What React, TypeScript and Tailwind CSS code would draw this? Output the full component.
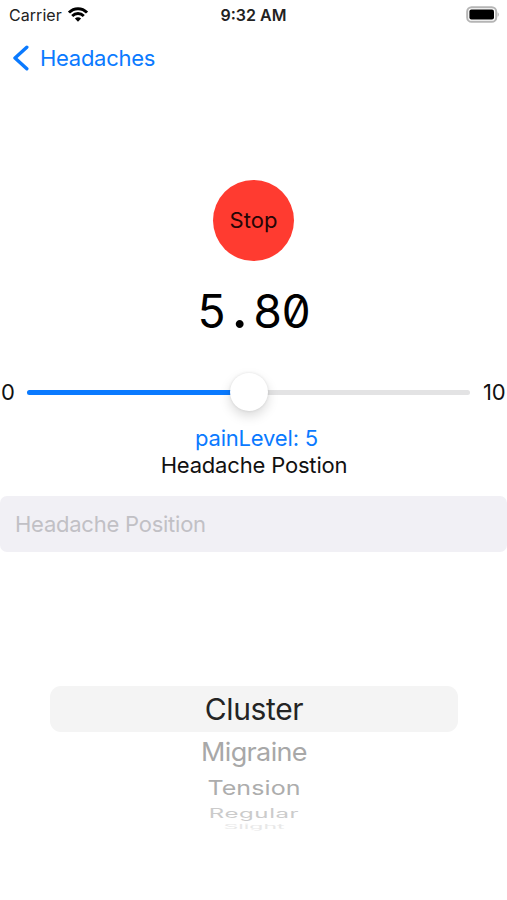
import clsx from 'clsx';
import { useState } from 'react';

const headacheTypes = [
    { name: 'Cluster', row: 'h-[46px] text-[#242424]', label: 'text-[30px] tracking-[-0.4px]' },
    { name: 'Migraine', row: 'h-[40px] text-[#a8a8a8]', label: 'text-[27px] scale-y-[0.95] tracking-[-0.65px]' },
    { name: 'Tension', row: 'h-[33px] text-[#adadad]', label: 'text-[25px] scale-y-[0.8] tracking-[0.1px]' },
    { name: 'Regular', row: 'h-[18px] text-[#cbcbcb]', label: 'text-[24px] scale-y-[0.52] tracking-[0.6px]' },
    { name: 'Slight', row: 'h-[8px] text-[#e8e8e8]', label: 'text-[23px] scale-y-[0.25]' },
];

function StatusBar() {
    return (
        <div className="grid h-[29px] grid-cols-3 items-center px-[9px] text-[16px] text-[#222]">
            <div className="flex items-center gap-[6px]">
                <span className="tracking-[0.05px]">Carrier</span>
                <svg width="20" height="15" viewBox="0 0 20 15" fill="none" stroke="#000" strokeWidth="2.9">
                    <path d="M1 5.6C6 0.4 14 0.4 19 5.6" />
                    <path d="M4.2 9C7.5 5.7 12.5 5.7 15.8 9" />
                    <path d="M10 14.7L6.9 11.6C8.7 9.9 11.3 9.9 13.1 11.6Z" fill="#000" stroke="none" />
                </svg>
            </div>
            <span className="text-center font-semibold tracking-[0]">9:32 AM</span>
            <svg className="-mr-px justify-self-end" width="33" height="17" viewBox="0 0 33 17">
                <rect x="1.2" y="1.2" width="29" height="14.6" rx="4.4" fill="#fff" stroke="#b5b5b5" strokeWidth="2" />
                <rect x="3.4" y="3.4" width="24.6" height="10.2" rx="2" fill="#000" />
                <path d="M31.6 6.2C33.2 7 33.2 10 31.6 10.8Z" fill="#b5b5b5" />
            </svg>
        </div>
    );
}

export default function App() {
    const [painLevel] = useState(5);

    return (
        <div className="flex h-[900px] w-[507px] flex-col overflow-hidden bg-white font-['Inter',sans-serif] text-[22px] text-[#111]">
            <StatusBar />

            {/* Navigation */}
            <nav className="flex h-[58px] items-center px-[12px] text-[#0a7aff]">
                <svg width="18" height="26" viewBox="0 0 18 26" fill="none" stroke="currentColor" strokeWidth="3.4" strokeLinecap="round" strokeLinejoin="round">
                    <path d="M14.8 2.2L3 13L14.8 23.8" />
                </svg>
                <span className="ml-[10px] tracking-[-0.28px]">Headaches</span>
            </nav>

            {/* Timer */}
            <div className="mt-[93px] flex flex-col items-center">
                <button className="size-[81px] rounded-full bg-[#ff3b30] text-[#260505]">Stop</button>
                <div className="mt-[15px] h-[56px] text-[46px] leading-[56px] tracking-[-1.1px] text-black tabular-nums slashed-zero">
                    5<span className="inline-block w-[27px] text-center text-[60px] leading-none">.</span>80
                </div>
            </div>

            {/* Pain slider */}
            <div className="mt-[39px] flex h-[42px] items-center">
                <span className="w-[27px] pl-px">0</span>
                <div className="relative h-[5px] w-[443px] rounded-full bg-[#e3e3e4]">
                    <div className="h-full w-1/2 rounded-full bg-[#0a7aff]" />
                    <div className="absolute top-[-17px] left-[203px] size-[38px] rounded-full bg-white shadow-[0_5px_12px_rgba(0,0,0,0.15),0_0_3px_rgba(0,0,0,0.1)]" />
                </div>
                <span className="ml-[13px] tracking-[-0.3px]">10</span>
            </div>
            <div className="mt-[12px] flex flex-col items-center leading-[27px] tracking-[-0.18px]">
                <span className="pl-[6px] text-[#0a7aff]">painLevel: {painLevel}</span>
                <span className="pl-px">Headache Postion</span>
            </div>

            <input
                className="mt-[17px] h-[56px] w-full rounded-[7px] bg-[#f1f0f5] px-[15px] tracking-[-0.24px] placeholder:text-[#c1c0c5]"
                placeholder="Headache Position"
            />

            {/* Type picker */}
            <div className="mt-[134px] mr-[49px] ml-[50px] flex flex-col">
                {headacheTypes.map((type, i) => (
                    <div
                        key={type.name}
                        className={clsx('flex shrink-0 items-center justify-center', i === 0 && 'rounded-[11px] bg-[#f4f4f4]', type.row)}
                    >
                        <span className={type.label}>{type.name}</span>
                    </div>
                ))}
            </div>
        </div>
    );
}
